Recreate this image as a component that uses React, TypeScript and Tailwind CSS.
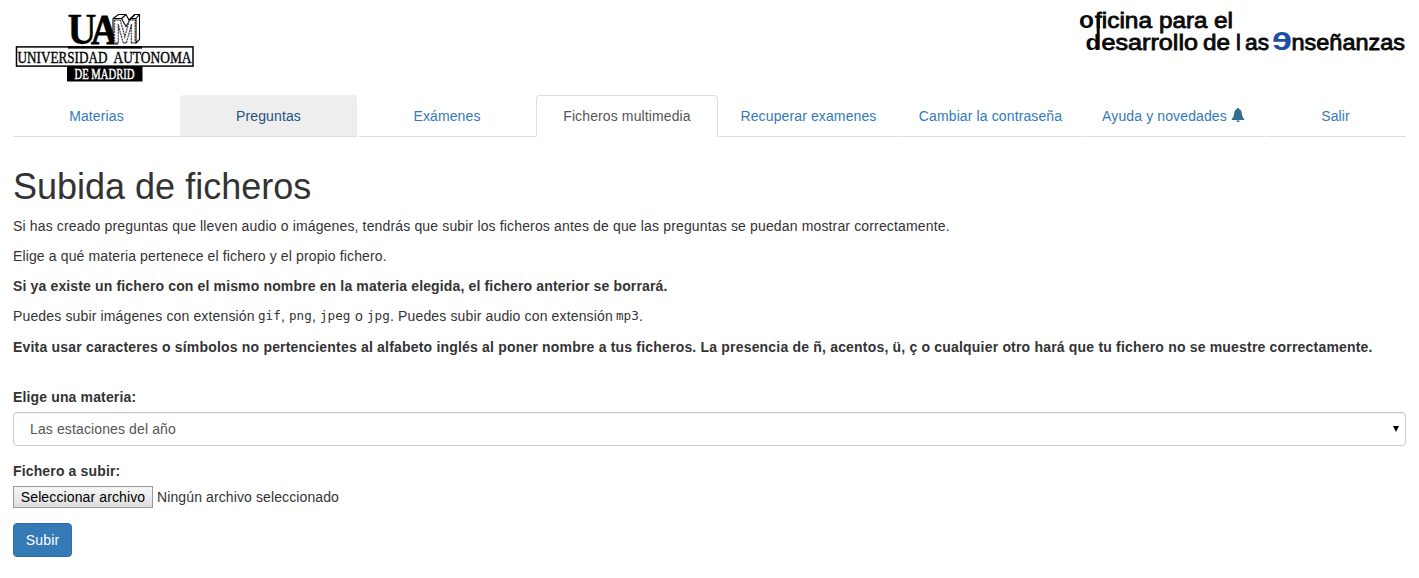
import React from "react";

function UamLogo() {
  return (
    <svg width="180" height="72" viewBox="0 0 180 72" className="block overflow-visible" role="img" aria-label="UAM">
      <g fontFamily="'Liberation Serif', serif" fill="#000">
        <text x="52.5" y="31.5" fontSize="44" fontWeight="700" stroke="#000" strokeWidth="0.3" textLength="29" lengthAdjust="spacingAndGlyphs">U</text>
        <text x="76" y="31.5" fontSize="43" fontWeight="700" stroke="#000" strokeWidth="0.9" textLength="27" lengthAdjust="spacingAndGlyphs">A</text>
        <path d="M98.5 6.5 104 2.5h8l3 4.5 5-4.5h4.5v25l-3.5 4H99Z" fill="#fff" stroke="none" />
        <path d="M98 6.5 103.5 2.5h7.5l3 5.5 5.500-5.500h5v25l-4 4M98 6.500h8.500l4.500 8 5-8h5v25M106.500 6.500l4.500-4M116 6.500l4-4M120.800 6.500l3.700-4M98 6.500v25" fill="none" stroke="#000" strokeWidth="1.1" />
        <text x="97.5" y="31" fontFamily="'Liberation Sans', sans-serif" fontWeight="700" fontSize="34" fill="#fff" stroke="#000" strokeWidth="1" strokeDasharray="2.2 0.6" textLength="24.5" lengthAdjust="spacingAndGlyphs">M</text>
        <rect x="1.5" y="34.9" width="176.5" height="19.2" fill="#fff" stroke="#000" strokeWidth="1.5" />
        <rect x="53" y="34" width="74" height="2.6" />
        <text x="2.5" y="50.5" fontSize="17" stroke="#000" strokeWidth="0.4" textLength="90" lengthAdjust="spacingAndGlyphs">UNIVERSIDAD</text>
        <text x="98.5" y="50.5" fontSize="17" stroke="#000" strokeWidth="0.4" textLength="78" lengthAdjust="spacingAndGlyphs">AUTONOMA</text>
        <rect x="52" y="54" width="75.5" height="15.5" />
        <text x="59.5" y="66.5" fontSize="14.5" fill="#fff" stroke="#fff" strokeWidth="0.45" textLength="60" lengthAdjust="spacingAndGlyphs">DE MADRID</text>
      </g>
    </svg>
  );
}

function OfficeLogo() {
  return (
    <svg width="330" height="48" viewBox="0 0 330 48" className="block overflow-visible">
      <g fontFamily="'Liberation Sans', sans-serif" fontSize="21.5" fill="#0a0a0a" stroke="#0a0a0a" strokeWidth="0.8">
        <text x="1" y="19.5" fontSize="24" fontWeight="700" strokeWidth="0" textLength="15" lengthAdjust="spacingAndGlyphs">o</text>
        <text x="17" y="19.7" textLength="57" lengthAdjust="spacingAndGlyphs">ficina</text>
        <text x="81" y="19.7" textLength="48.5" lengthAdjust="spacingAndGlyphs">para</text>
        <text x="136" y="19.7" textLength="19" lengthAdjust="spacingAndGlyphs">el</text>
        <text x="7.5" y="41.7" fontWeight="700" strokeWidth="0" textLength="15" lengthAdjust="spacingAndGlyphs">d</text>
        <text x="23.5" y="41.7" textLength="96.5" lengthAdjust="spacingAndGlyphs">esarrollo</text>
        <text x="125" y="41.7" textLength="27" lengthAdjust="spacingAndGlyphs">de</text>
        <text x="158" y="41.7">l</text>
        <text x="167" y="41.7" textLength="24" lengthAdjust="spacingAndGlyphs">as</text>
        <text transform="translate(214 41.7) scale(-1 1)" x="0" y="0" fontSize="33" fontWeight="700" strokeWidth="0" fill="#1d4fa3" textLength="20" lengthAdjust="spacingAndGlyphs">e</text>
        <text x="213.5" y="41.7" textLength="113.5" lengthAdjust="spacingAndGlyphs">nseñanzas</text>
        <path d="M20.2 10v31.500" strokeWidth="3" fill="none" />
      </g>
    </svg>
  );
}

function Bell() {
  return (
    <svg width="14" height="14" viewBox="0 0 14 14" className="relative -top-px ml-1 inline-block" fill="#2f6f8f">
      <path d="M7 0c.7 0 1 .5 1 1.100 1.700.5 2.600 2 2.800 4.200.2 2.700.8 4 2.400 5.700v1H.8v-1C2.400 9.300 3 8 3.200 5.300 3.400 3.100 4.300 1.600 6 1.100 6 .5 6.300 0 7 0ZM5.300 12.500h3.400C8.500 13.500 7.800 14 7 14s-1.500-.5-1.700-1.500Z" />
    </svg>
  );
}

const tabs = [
  { label: "Materias", width: "w-[167px]" },
  { label: "Preguntas", width: "w-[177px]", hover: true },
  { label: "Exámenes", width: "w-[178px] ml-px" },
  { label: "Ficheros multimedia", width: "w-[182px]", active: true },
  { label: "Recuperar examenes", width: "w-[181px]" },
  { label: "Cambiar la contraseña", width: "w-[183px]" },
  { label: "Ayuda y novedades", width: "w-[183px]", bell: true },
  { label: "Salir", width: "w-[141px]" },
];

function Code({ children, width }: { children: string; width: string }) {
  return (
    <code className={`inline-block whitespace-nowrap font-['DejaVu_Sans_Mono','Liberation_Mono',monospace] text-[12.6px] leading-5 tracking-[0px] ${width}`}>
      {children}
    </code>
  );
}

export default function App() {
  return (
    <main className="h-[578px] overflow-hidden bg-white px-[13px] font-['Liberation_Sans',Arial,sans-serif] text-[14px] leading-5 tracking-[0.145px] text-[#333]">
      <header className="flex h-[95px] items-start justify-between pl-[2px] pt-3 tracking-normal">
        <UamLogo />
        <div className="-mt-[4px] -mr-[2px]"><OfficeLogo /></div>
      </header>

      <nav className="flex h-[42px] tracking-[0.12px]">
        {tabs.map((tab) => {
          const look = tab.active
            ? "border-x border-t border-x-[#ddd] border-t-[#ddd] border-b-white text-[#555]"
            : tab.hover
              ? "border-x border-t border-x-[#eee] border-t-[#eee] border-b-[#ddd] bg-[#eee] text-[#23527c]"
              : "border-x border-t border-x-transparent border-t-transparent border-b-[#ddd] text-[#337ab7]";
          return (
            <a key={tab.label} className={`flex h-[42px] shrink-0 items-center justify-center whitespace-nowrap rounded-t border-b ${tab.width} ${look}`}>
              {tab.label}
              {tab.bell && <Bell />}
            </a>
          );
        })}
      </nav>

      <h1 className="mt-[30px] mb-[9px] text-[36px] font-normal leading-[40px] tracking-normal">Subida de ficheros</h1>
      <p className="mb-[10px] tracking-[0.15px]">Si has creado preguntas que lleven audio o imágenes, tendrás que subir los ficheros antes de que las preguntas se puedan mostrar correctamente.</p>
      <p className="mb-[10px] tracking-[0.13px]">Elige a qué materia pertenece el fichero y el propio fichero.</p>
      <p className="mb-[10px] font-bold">Si ya existe un fichero con el mismo nombre en la materia elegida, el fichero anterior se borrará.</p>
      <p className="mb-[11px] flex h-5 whitespace-pre">
        <span className="w-[245px]">{"Puedes subir imágenes con extensión "}</span>
        <Code width="w-[23px]">gif</Code>
        <span className="w-[8px]">{", "}</span>
        <Code width="w-[23px]">png</Code>
        <span className="w-[8px]">{", "}</span>
        <Code width="w-[31px]">jpeg</Code>
        <span className="w-[16px]">{" o "}</span>
        <Code width="w-[23px]">jpg</Code>
        <span className="w-[226px]">{". Puedes subir audio con extensión "}</span>
        <Code width="w-[23px]">mp3</Code>
        <span>.</span>
      </p>
      <p className="whitespace-nowrap font-bold tracking-[0.19px]">Evita usar caracteres o símbolos no pertencientes al alfabeto inglés al poner nombre a tus ficheros. La presencia de ñ, acentos, ü, ç o cualquier otro hará que tu fichero no se muestre correctamente.</p>

      <form>
        <label className="mt-[30px] mb-[5px] block font-bold">Elige una materia:</label>
        <button type="button" className="flex h-[34px] w-full items-center justify-between rounded border border-[#ccc] bg-white pl-4 pr-[6px] text-left tracking-[0.12px] text-[#555] shadow-[inset_0_1px_1px_rgba(0,0,0,0.075)]">
          <span>Las estaciones del año</span>
          <svg width="6" height="6" viewBox="0 0 6 6" fill="#000"><path d="M0 0h6L3 6Z" /></svg>
        </button>
        <label className="mt-[15px] mb-[5px] block font-bold">Fichero a subir:</label>
        <div className="flex h-[22px] items-center gap-1">
          <button type="button" className="h-[22px] w-[140px] whitespace-nowrap border border-[#999] bg-linear-to-b from-[#f6f6f6] to-[#dedede] tracking-[0.12px] text-black">Seleccionar archivo</button>
          <span className="tracking-[0.11px]">Ningún archivo seleccionado</span>
        </div>
        <button type="button" className="mt-[15px] block h-[34px] w-[59px] rounded border border-[#2e6da4] bg-[#337ab7] text-white">Subir</button>
      </form>
    </main>
  );
}
